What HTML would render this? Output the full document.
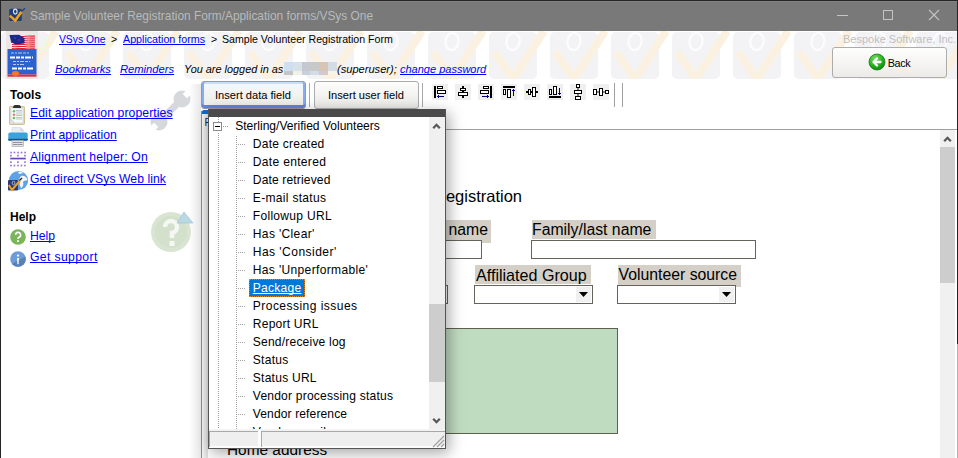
<!DOCTYPE html>
<html><head><meta charset="utf-8"><style>
html,body{margin:0;padding:0;}
body{width:958px;height:458px;position:relative;overflow:hidden;background:#fff;font-family:"Liberation Sans",sans-serif;}
.t{position:absolute;white-space:pre;}
u{text-decoration:underline;text-decoration-skip-ink:none;}
</style></head><body>
<div style="position:absolute;left:0;top:0;width:958px;height:31px;background:#797979;"></div>
<div style="position:absolute;left:0;top:0;width:958px;height:1px;background:#242424;"></div>
<div style="position:absolute;left:1px;top:1px;width:956px;height:1px;background:#828282;"></div>
<svg style="position:absolute;left:8px;top:7px" width="18" height="16" viewBox="0 0 18 16">
<rect x="1.2" y="1.7" width="12.6" height="12.3" rx="1.5" fill="#1f3f7a"/>
<ellipse cx="7.3" cy="4.6" rx="1.8" ry="2.5" fill="none" stroke="#e8e8f0" stroke-width="1.1"/>
<path d="M1.8 8.6 L7.3 13.6 L13.6 4.6" fill="none" stroke="#f0a020" stroke-width="2.6" stroke-linejoin="miter"/>
<path d="M13.4 4.6 L16.9 1.3" stroke="#1f3f7a" stroke-width="1.3"/>
</svg>
<div class="t " style="left:30px;top:8.88px;font-size:11.9px;line-height:15px;color:#b7bbbb;">Sample Volunteer Registration Form/Application forms/VSys One</div>
<div style="position:absolute;left:837px;top:15px;width:11px;height:1px;background:#c4c4c4"></div>
<div style="position:absolute;left:883px;top:10px;width:8px;height:8px;border:1px solid #c4c4c4"></div>
<svg style="position:absolute;left:928px;top:9px" width="12" height="12" viewBox="0 0 12 12"><path d="M1 1 L11 11 M11 1 L1 11" stroke="#c4c4c4" stroke-width="1.1"/></svg>
<div style="position:absolute;left:0;top:0;width:1px;height:458px;background:#242424;"></div>
<div style="position:absolute;left:957px;top:0;width:1px;height:344px;background:#242424;"></div>
<div style="position:absolute;left:957px;top:344px;width:1px;height:114px;background:#b4b4b4;"></div>
<svg style="position:absolute;left:1px;top:31px" width="956" height="48"><g transform="translate(0,1)">
<rect x="0" y="0" width="48" height="47" rx="5" fill="#f3f3f6"/>
<ellipse cx="24" cy="9.5" rx="6.5" ry="8.6" fill="none" stroke="#fcfcfd" stroke-width="2.3" transform="rotate(10 24 9.5)"/>
<path d="M5 20 L24 47 L55 -1" fill="none" stroke="#faf1e1" stroke-width="8" stroke-linejoin="miter"/>
</g><g transform="translate(61,1)">
<rect x="0" y="0" width="48" height="47" rx="5" fill="#f3f3f6"/>
<ellipse cx="24" cy="9.5" rx="6.5" ry="8.6" fill="none" stroke="#fcfcfd" stroke-width="2.3" transform="rotate(10 24 9.5)"/>
<path d="M5 20 L24 47 L55 -1" fill="none" stroke="#faf1e1" stroke-width="8" stroke-linejoin="miter"/>
</g><g transform="translate(122,1)">
<rect x="0" y="0" width="48" height="47" rx="5" fill="#f3f3f6"/>
<ellipse cx="24" cy="9.5" rx="6.5" ry="8.6" fill="none" stroke="#fcfcfd" stroke-width="2.3" transform="rotate(10 24 9.5)"/>
<path d="M5 20 L24 47 L55 -1" fill="none" stroke="#faf1e1" stroke-width="8" stroke-linejoin="miter"/>
</g><g transform="translate(183,1)">
<rect x="0" y="0" width="48" height="47" rx="5" fill="#f3f3f6"/>
<ellipse cx="24" cy="9.5" rx="6.5" ry="8.6" fill="none" stroke="#fcfcfd" stroke-width="2.3" transform="rotate(10 24 9.5)"/>
<path d="M5 20 L24 47 L55 -1" fill="none" stroke="#faf1e1" stroke-width="8" stroke-linejoin="miter"/>
</g><g transform="translate(244,1)">
<rect x="0" y="0" width="48" height="47" rx="5" fill="#f3f3f6"/>
<ellipse cx="24" cy="9.5" rx="6.5" ry="8.6" fill="none" stroke="#fcfcfd" stroke-width="2.3" transform="rotate(10 24 9.5)"/>
<path d="M5 20 L24 47 L55 -1" fill="none" stroke="#faf1e1" stroke-width="8" stroke-linejoin="miter"/>
</g><g transform="translate(305,1)">
<rect x="0" y="0" width="48" height="47" rx="5" fill="#f3f3f6"/>
<ellipse cx="24" cy="9.5" rx="6.5" ry="8.6" fill="none" stroke="#fcfcfd" stroke-width="2.3" transform="rotate(10 24 9.5)"/>
<path d="M5 20 L24 47 L55 -1" fill="none" stroke="#faf1e1" stroke-width="8" stroke-linejoin="miter"/>
</g><g transform="translate(366,1)">
<rect x="0" y="0" width="48" height="47" rx="5" fill="#f3f3f6"/>
<ellipse cx="24" cy="9.5" rx="6.5" ry="8.6" fill="none" stroke="#fcfcfd" stroke-width="2.3" transform="rotate(10 24 9.5)"/>
<path d="M5 20 L24 47 L55 -1" fill="none" stroke="#faf1e1" stroke-width="8" stroke-linejoin="miter"/>
</g><g transform="translate(427,1)">
<rect x="0" y="0" width="48" height="47" rx="5" fill="#f3f3f6"/>
<ellipse cx="24" cy="9.5" rx="6.5" ry="8.6" fill="none" stroke="#fcfcfd" stroke-width="2.3" transform="rotate(10 24 9.5)"/>
<path d="M5 20 L24 47 L55 -1" fill="none" stroke="#faf1e1" stroke-width="8" stroke-linejoin="miter"/>
</g><g transform="translate(488,1)">
<rect x="0" y="0" width="48" height="47" rx="5" fill="#f3f3f6"/>
<ellipse cx="24" cy="9.5" rx="6.5" ry="8.6" fill="none" stroke="#fcfcfd" stroke-width="2.3" transform="rotate(10 24 9.5)"/>
<path d="M5 20 L24 47 L55 -1" fill="none" stroke="#faf1e1" stroke-width="8" stroke-linejoin="miter"/>
</g><g transform="translate(549,1)">
<rect x="0" y="0" width="48" height="47" rx="5" fill="#f3f3f6"/>
<ellipse cx="24" cy="9.5" rx="6.5" ry="8.6" fill="none" stroke="#fcfcfd" stroke-width="2.3" transform="rotate(10 24 9.5)"/>
<path d="M5 20 L24 47 L55 -1" fill="none" stroke="#faf1e1" stroke-width="8" stroke-linejoin="miter"/>
</g><g transform="translate(610,1)">
<rect x="0" y="0" width="48" height="47" rx="5" fill="#f3f3f6"/>
<ellipse cx="24" cy="9.5" rx="6.5" ry="8.6" fill="none" stroke="#fcfcfd" stroke-width="2.3" transform="rotate(10 24 9.5)"/>
<path d="M5 20 L24 47 L55 -1" fill="none" stroke="#faf1e1" stroke-width="8" stroke-linejoin="miter"/>
</g><g transform="translate(671,1)">
<rect x="0" y="0" width="48" height="47" rx="5" fill="#f3f3f6"/>
<ellipse cx="24" cy="9.5" rx="6.5" ry="8.6" fill="none" stroke="#fcfcfd" stroke-width="2.3" transform="rotate(10 24 9.5)"/>
<path d="M5 20 L24 47 L55 -1" fill="none" stroke="#faf1e1" stroke-width="8" stroke-linejoin="miter"/>
</g><g transform="translate(732,1)">
<rect x="0" y="0" width="48" height="47" rx="5" fill="#f3f3f6"/>
<ellipse cx="24" cy="9.5" rx="6.5" ry="8.6" fill="none" stroke="#fcfcfd" stroke-width="2.3" transform="rotate(10 24 9.5)"/>
<path d="M5 20 L24 47 L55 -1" fill="none" stroke="#faf1e1" stroke-width="8" stroke-linejoin="miter"/>
</g><g transform="translate(793,1)">
<rect x="0" y="0" width="48" height="47" rx="5" fill="#f3f3f6"/>
<ellipse cx="24" cy="9.5" rx="6.5" ry="8.6" fill="none" stroke="#fcfcfd" stroke-width="2.3" transform="rotate(10 24 9.5)"/>
<path d="M5 20 L24 47 L55 -1" fill="none" stroke="#faf1e1" stroke-width="8" stroke-linejoin="miter"/>
</g><g transform="translate(854,1)">
<rect x="0" y="0" width="48" height="47" rx="5" fill="#f3f3f6"/>
<ellipse cx="24" cy="9.5" rx="6.5" ry="8.6" fill="none" stroke="#fcfcfd" stroke-width="2.3" transform="rotate(10 24 9.5)"/>
<path d="M5 20 L24 47 L55 -1" fill="none" stroke="#faf1e1" stroke-width="8" stroke-linejoin="miter"/>
</g><g transform="translate(915,1)">
<rect x="0" y="0" width="48" height="47" rx="5" fill="#f3f3f6"/>
<ellipse cx="24" cy="9.5" rx="6.5" ry="8.6" fill="none" stroke="#fcfcfd" stroke-width="2.3" transform="rotate(10 24 9.5)"/>
<path d="M5 20 L24 47 L55 -1" fill="none" stroke="#faf1e1" stroke-width="8" stroke-linejoin="miter"/>
</g></svg>
<svg style="position:absolute;left:6px;top:31px" width="32" height="48" viewBox="0 0 32 48">
<rect width="32" height="48" fill="#ece6e4"/>
<path d="M4 4 L28 4.5 L29 17.5 L6 19 Z" fill="#f6f2f2"/>
<path d="M5 5.5 C10 4.7 14 6.2 20 5.2 C24 4.5 26 5.6 29 5 M5 7.5 C10 6.7 14 8.2 20 7.2 C24 6.5 26 7.6 29 7 M5 9.5 C10 8.7 14 10.2 20 9.2 C24 8.5 26 9.6 29 9 M5 11.5 C10 10.7 14 12.2 20 11.2 C24 10.5 26 11.6 29 11 M6 13.5 C10 12.7 14 14.2 20 13.2 C24 12.5 26 13.6 29 13 M6 15.5 C10 14.7 14 16.2 20 15.2 C24 14.5 26 15.6 29 15 M6 17.5 C10 16.7 14 18.2 20 17.2 C24 16.5 26 17.6 29 17" fill="none" stroke="#e02030" stroke-width="1.1"/>
<path d="M3.5 4 L13 3.8 L18.5 7 L18.5 12.5 L9 13.5 L5 10.5 Z" fill="#1a2a8a"/>
<circle cx="9" cy="7" r="0.45" fill="#c8d0f0"/><circle cx="13" cy="9" r="0.45" fill="#c8d0f0"/>
<rect x="1.5" y="18" width="29" height="25.5" fill="#2d62cc"/>
<path d="M5 22 H23 M7 30.5 H24 M7 33.5 H18" stroke="#c8d4f4" stroke-width="0.9" stroke-dasharray="3 1 2 1 4 1"/>
<path d="M4 26.5 H27 M6 37.5 H28" stroke="#ffffff" stroke-width="1.8" stroke-dasharray="5 1 4 1 3 1 6 1"/>
<rect x="1.5" y="43.5" width="29" height="2.2" fill="#d83040"/>
<ellipse cx="9.5" cy="42.5" rx="3.5" ry="2.4" fill="#f07828"/>
</svg>
<div class="t " style="left:59px;top:32.93px;font-size:10.3px;line-height:13px;color:#0000ff;"><u>VSys One</u></div>
<div class="t " style="left:111px;top:32.83px;font-size:10.6px;line-height:13px;color:#000;">&gt;</div>
<div class="t " style="left:123px;top:32.79px;font-size:10.7px;line-height:13px;color:#0000ff;"><u>Application forms</u></div>
<div class="t " style="left:211px;top:32.83px;font-size:10.6px;line-height:13px;color:#000;">&gt;</div>
<div class="t " style="left:222px;top:32.83px;font-size:10.6px;line-height:13px;color:#000;">Sample Volunteer Registration Form</div>
<div class="t " style="left:843px;top:31.89px;font-size:11px;line-height:14px;color:#c0c0c0;">Bespoke Software, Inc.</div>
<div class="t " style="left:55px;top:62.12px;font-size:11.2px;line-height:14px;color:#0000ff;font-style:italic"><u>Bookmarks</u></div>
<div class="t " style="left:120px;top:62.12px;font-size:11.2px;line-height:14px;color:#0000ff;font-style:italic"><u>Reminders</u></div>
<div class="t " style="left:184px;top:62.22px;font-size:10.9px;line-height:14px;color:#000;font-style:italic">You are logged in as</div>
<div style="position:absolute;left:284px;top:62px;width:9px;height:9px;background:#d0dff0"></div>
<div style="position:absolute;left:284px;top:71px;width:9px;height:4px;background:#c4c4c4"></div>
<div style="position:absolute;left:293px;top:62px;width:9px;height:9px;background:#d5e2ea"></div>
<div style="position:absolute;left:293px;top:71px;width:9px;height:4px;background:#f2f2e4"></div>
<div style="position:absolute;left:302px;top:62px;width:8px;height:9px;background:#c6c8d0"></div>
<div style="position:absolute;left:302px;top:71px;width:8px;height:4px;background:#c8d0dc"></div>
<div style="position:absolute;left:310px;top:62px;width:9px;height:9px;background:#c8c8c8"></div>
<div style="position:absolute;left:310px;top:71px;width:9px;height:4px;background:#d4dce6"></div>
<div style="position:absolute;left:319px;top:62px;width:9px;height:9px;background:#d8c4b4"></div>
<div style="position:absolute;left:319px;top:71px;width:9px;height:4px;background:#d4c8cc"></div>
<div style="position:absolute;left:328px;top:62px;width:9px;height:9px;background:#d4dce6"></div>
<div style="position:absolute;left:328px;top:71px;width:9px;height:4px;background:#f8f4e4"></div>
<div class="t " style="left:337px;top:62.15px;font-size:11.1px;line-height:14px;color:#000;font-style:italic">(superuser);</div>
<div class="t " style="left:400px;top:62.19px;font-size:11.0px;line-height:14px;color:#0000ff;font-style:italic"><u>change password</u></div>
<div style="position:absolute;left:832px;top:47px;width:113px;height:29px;border:1px solid #acacac;border-radius:3px;background:linear-gradient(#fefefe,#f4f3f1 60%,#ecebe8);"></div>
<svg style="position:absolute;left:868px;top:53px" width="18" height="18" viewBox="0 0 18 18">
<defs><radialGradient id="gb" cx="0.4" cy="0.3" r="0.75"><stop offset="0" stop-color="#7de06a"/><stop offset="0.6" stop-color="#26b01e"/><stop offset="1" stop-color="#11800e"/></radialGradient></defs>
<circle cx="9" cy="9" r="8" fill="url(#gb)" stroke="#1a7a14" stroke-width="0.8"/>
<path d="M12.5 9 H6 M9 5.5 L5.5 9 L9 12.5" fill="none" stroke="#fff" stroke-width="2.3" stroke-linecap="round" stroke-linejoin="round"/>
</svg>
<div class="t " style="left:887.8px;top:55.96px;font-size:10.8px;line-height:14px;color:#000;letter-spacing:-0.4px">Back</div>
<div style="position:absolute;left:189px;top:84px;width:12px;height:374px;background:linear-gradient(90deg,rgba(235,235,235,0),#e8e8e8);"></div>
<svg style="position:absolute;left:148px;top:88px" width="46" height="46" viewBox="0 0 46 46">
<defs><mask id="wmk"><rect width="46" height="46" fill="#fff"/>
<rect x="-3" y="-13" width="6" height="9" fill="#000" transform="translate(34,11) rotate(45)"/>
<rect x="-3" y="-13" width="6" height="9" fill="#000" transform="translate(11,34) rotate(225)"/>
</mask></defs>
<g mask="url(#wmk)" fill="#d5d9dc">
<circle cx="34" cy="11" r="8.5"/><circle cx="11" cy="34" r="8.5"/>
<path d="M11 34 L34 11" stroke="#d5d9dc" stroke-width="7"/>
</g></svg>
<div class="t " style="left:10px;top:87.54px;font-size:12px;line-height:15px;color:#000;font-weight:bold">Tools</div>
<div class="t " style="left:30px;top:105.77px;font-size:12.2px;line-height:15px;color:#0000ff;letter-spacing:0.09px"><u>Edit application properties</u></div>
<div class="t " style="left:30px;top:127.77px;font-size:12.2px;line-height:15px;color:#0000ff;"><u>Print application</u></div>
<div class="t " style="left:30px;top:150.27px;font-size:12.2px;line-height:15px;color:#0000ff;letter-spacing:0.17px"><u>Alignment helper: On</u></div>
<div class="t " style="left:30px;top:171.87px;font-size:12.2px;line-height:15px;color:#0000ff;letter-spacing:0.06px"><u>Get direct VSys Web link</u></div>
<div class="t " style="left:10px;top:209.74px;font-size:12px;line-height:15px;color:#000;font-weight:bold">Help</div>
<div class="t " style="left:30px;top:228.77px;font-size:12.2px;line-height:15px;color:#0000ff;"><u>Help</u></div>
<div class="t " style="left:30px;top:249.67px;font-size:12.2px;line-height:15px;color:#0000ff;letter-spacing:0.36px"><u>Get support</u></div>
<svg style="position:absolute;left:150px;top:211px" width="44" height="42" viewBox="0 0 44 42">
<circle cx="21" cy="21" r="20" fill="#d9e5d2"/>
<circle cx="21" cy="21" r="16" fill="#d3e0cb"/>
<path d="M15 16 A6 6 0 1 1 22 22 L22 27" fill="none" stroke="#f4f7f2" stroke-width="4.5"/>
<rect x="19.5" y="30" width="5" height="5" fill="#f4f7f2"/>
<path d="M34 1 L43 12 L27 12 Z" fill="#b9d8e2" stroke="#a8c4dc" stroke-width="0.8"/>
</svg>
<svg style="position:absolute;left:9px;top:104px" width="16" height="21" viewBox="0 0 16 21">
<rect x="0.5" y="2.5" width="15" height="18" rx="0.8" fill="#eadfbe" stroke="#c9b27a" stroke-width="0.8"/>
<rect x="2" y="4" width="12" height="15" fill="#f8fbfd" stroke="#b8d0e4" stroke-width="0.6"/>
<path d="M4 3.2 Q4.5 1 6 1 L10 1 Q11.5 1 12 3.2 L12 4 L4 4 Z" fill="#303030"/>
<circle cx="5" cy="7.3" r="1.3" fill="#6ec060"/>
<circle cx="5" cy="10.7" r="1.3" fill="#d88080"/>
<circle cx="5" cy="14" r="1.3" fill="#6ec060"/>
<path d="M7 6.5 H13 M7 8 H13 M7 10 H13 M7 11.5 H13 M7 13.5 H13 M7 15 H13" stroke="#a8b0b8" stroke-width="0.7"/>
<path d="M2.2 15.5 L5 19" stroke="#b0b0b0" stroke-width="0.8"/>
</svg>
<svg style="position:absolute;left:8px;top:127px" width="20" height="20" viewBox="0 0 20 20">
<path d="M4 0.5 H12.5 L16 4 V7 H4 Z" fill="#e9edf0" stroke="#cfd4d8" stroke-width="0.6"/>
<path d="M12.5 0.5 V4 H16" fill="#d0d6da"/>
<rect x="0.3" y="5.5" width="19.4" height="8.5" rx="1.5" fill="#3aa2dc"/>
<rect x="0.3" y="11.8" width="19.4" height="1.6" fill="#1e5478"/>
<rect x="4" y="13.5" width="11.5" height="6" fill="#e4e6e8" stroke="#9aa0a4" stroke-width="0.6"/>
<path d="M5 15.5 H14.5 M5 17.5 H14.5" stroke="#80868a" stroke-width="0.9"/>
<path d="M9.75 14 V19.3" stroke="#c8ccd0" stroke-width="0.6"/>
</svg>
<svg style="position:absolute;left:10px;top:151px" width="16" height="16" viewBox="0 0 16 16"><rect x="0.2" y="0.7" width="1.7" height="1.7" fill="#9a7ad0"/><rect x="0.1" y="13.7" width="1.7" height="1.7" fill="#9a7ad0"/><rect x="3.6" y="0.7" width="1.7" height="1.7" fill="#9a7ad0"/><rect x="3.6" y="13.7" width="1.7" height="1.7" fill="#9a7ad0"/><rect x="7.2" y="0.7" width="1.7" height="1.7" fill="#9a7ad0"/><rect x="7.1" y="13.7" width="1.7" height="1.7" fill="#9a7ad0"/><rect x="10.7" y="0.7" width="1.7" height="1.7" fill="#9a7ad0"/><rect x="10.6" y="13.7" width="1.7" height="1.7" fill="#9a7ad0"/><rect x="14.2" y="0.7" width="1.7" height="1.7" fill="#9a7ad0"/><rect x="14.1" y="13.7" width="1.7" height="1.7" fill="#9a7ad0"/><rect x="0.1" y="3.8" width="1.7" height="1.7" fill="#9a7ad0"/><rect x="0.1" y="10.3" width="1.7" height="1.7" fill="#9a7ad0"/><rect x="7.1" y="3.8" width="1.7" height="1.7" fill="#9a7ad0"/><rect x="7.1" y="10.3" width="1.7" height="1.7" fill="#9a7ad0"/><rect x="14.1" y="3.8" width="1.7" height="1.7" fill="#9a7ad0"/><rect x="14.1" y="10.3" width="1.7" height="1.7" fill="#9a7ad0"/><rect x="0.2" y="6.7" width="15.6" height="1.7" fill="#6a44b8"/></svg>
<svg style="position:absolute;left:7px;top:170px" width="22" height="22" viewBox="0 0 22 22">
<circle cx="11.5" cy="10.5" r="9.6" fill="#5da2e6"/>
<path d="M11 2 C13 1.5 15 2 16 3 C14 4 13 3.5 12 4 Z M14 6 C17 5 20 7 20.5 10 C19 11 17 10 16 12 C17 14 16 17 14 18 C13 16 12 14 13 12 C12 10 12 8 14 6 Z" fill="#f2f6fa"/>
<rect x="1" y="10" width="10" height="10.5" rx="1" fill="#2a3a70"/>
<ellipse cx="6.5" cy="13" rx="1.4" ry="1.8" fill="none" stroke="#c0c8e0" stroke-width="0.8"/>
<path d="M1.8 15 L5 20 L13 10.5" fill="none" stroke="#f0a020" stroke-width="2"/>
<path d="M12.5 10.5 L15 8" stroke="#202020" stroke-width="1.2"/>
</svg>
<svg style="position:absolute;left:10px;top:229px" width="16" height="16" viewBox="0 0 16 16">
<circle cx="8" cy="8" r="7.8" fill="#7ab55c"/>
<path d="M5.6 5.8 A2.5 2.5 0 1 1 8.9 8.2 Q8 8.8 8 10" fill="none" stroke="#fff" stroke-width="1.6"/>
<rect x="7.1" y="11.2" width="1.8" height="1.8" fill="#fff"/>
</svg>
<svg style="position:absolute;left:10px;top:251px" width="16" height="16" viewBox="0 0 16 16">
<defs><clipPath id="ic"><circle cx="8" cy="8" r="7.8"/></clipPath></defs>
<g clip-path="url(#ic)"><rect width="16" height="16" fill="#6e9cd8"/><path d="M0 14 L16 5 L16 16 L0 16 Z" fill="#5a80b8"/></g>
<circle cx="8" cy="4.6" r="1.15" fill="#fff"/>
<path d="M7.1 7 H8.9 L8.6 13.2 H7.4 Z" fill="#fff"/>
</svg>
<div style="position:absolute;left:201px;top:81px;width:103px;height:26px;border:1px solid #9a9a9a;border-radius:3px;background:linear-gradient(#f4f8fe,#f2f2f0 50%,#ecebe8);box-shadow:inset 0 -3px 0 0 #6284e0, inset 2px 0 0 0 #88acf0, inset -2px 0 0 0 #88acf0, inset 0 2px 0 0 #c4e0fc;"></div>
<div class="t " style="left:215px;top:88.15px;font-size:11.1px;line-height:14px;color:#000;">Insert data field</div>
<div style="position:absolute;left:309px;top:83px;width:1px;height:24px;background:#a8a8a8"></div>
<div style="position:absolute;left:314px;top:81px;width:103px;height:26px;border:1px solid #acacac;border-radius:3px;background:linear-gradient(#fdfdfd,#f3f3f1 50%,#ebeae7);"></div>
<div class="t " style="left:328px;top:88.15px;font-size:11.1px;line-height:14px;color:#000;">Insert user field</div>
<div style="position:absolute;left:422px;top:83px;width:1px;height:24px;background:#a8a8a8"></div>
<svg style="position:absolute;left:432px;top:84px" width="16" height="16" viewBox="0 0 16 16" shape-rendering="crispEdges"><rect width="16" height="16" fill="#efefef"/><rect x="2" y="2" width="2" height="12" fill="#000"/><rect x="5" y="2" width="6" height="3" fill="#000"/><rect x="6" y="3" width="4" height="1" fill="#fff"/><rect x="5" y="6" width="9" height="4" fill="#000"/><rect x="6" y="7" width="7" height="2" fill="#fff"/><rect x="5" y="12" width="7" height="1" fill="#000080"/><rect x="6" y="11" width="1" height="3" fill="#000080"/></svg>
<svg style="position:absolute;left:455px;top:84px" width="16" height="16" viewBox="0 0 16 16" shape-rendering="crispEdges"><rect width="16" height="16" fill="#efefef"/><rect x="7" y="2" width="2" height="12" fill="#000"/><rect x="5" y="4" width="6" height="3" fill="#000"/><rect x="6" y="5" width="4" height="1" fill="#fff"/><rect x="3" y="8" width="10" height="4" fill="#000"/><rect x="4" y="9" width="8" height="2" fill="#fff"/></svg>
<svg style="position:absolute;left:478px;top:84px" width="16" height="16" viewBox="0 0 16 16" shape-rendering="crispEdges"><rect width="16" height="16" fill="#efefef"/><rect x="12" y="2" width="2" height="12" fill="#000"/><rect x="5" y="2" width="6" height="3" fill="#000"/><rect x="6" y="3" width="4" height="1" fill="#fff"/><rect x="2" y="6" width="9" height="4" fill="#000"/><rect x="3" y="7" width="7" height="2" fill="#fff"/><rect x="4" y="12" width="7" height="1" fill="#000080"/><rect x="9" y="11" width="1" height="3" fill="#000080"/></svg>
<svg style="position:absolute;left:501px;top:84px" width="16" height="16" viewBox="0 0 16 16" shape-rendering="crispEdges"><rect width="16" height="16" fill="#efefef"/><rect x="2" y="2" width="12" height="2" fill="#000"/><rect x="2" y="5" width="3" height="6" fill="#000"/><rect x="3" y="6" width="1" height="4" fill="#fff"/><rect x="6" y="5" width="4" height="9" fill="#000"/><rect x="7" y="6" width="2" height="7" fill="#fff"/><rect x="12" y="5" width="1" height="7" fill="#000080"/><rect x="11" y="6" width="3" height="1" fill="#000080"/></svg>
<svg style="position:absolute;left:524px;top:84px" width="16" height="16" viewBox="0 0 16 16" shape-rendering="crispEdges"><rect width="16" height="16" fill="#efefef"/><rect x="2" y="7" width="12" height="2" fill="#000"/><rect x="4" y="5" width="3" height="6" fill="#000"/><rect x="5" y="6" width="1" height="4" fill="#fff"/><rect x="8" y="3" width="4" height="10" fill="#000"/><rect x="9" y="4" width="2" height="8" fill="#fff"/></svg>
<svg style="position:absolute;left:547px;top:84px" width="16" height="16" viewBox="0 0 16 16" shape-rendering="crispEdges"><rect width="16" height="16" fill="#efefef"/><rect x="2" y="12" width="12" height="2" fill="#000"/><rect x="2" y="5" width="3" height="6" fill="#000"/><rect x="3" y="6" width="1" height="4" fill="#fff"/><rect x="6" y="2" width="4" height="9" fill="#000"/><rect x="7" y="3" width="2" height="7" fill="#fff"/><rect x="12" y="4" width="1" height="7" fill="#000080"/><rect x="11" y="9" width="3" height="1" fill="#000080"/></svg>
<svg style="position:absolute;left:570px;top:84px" width="16" height="16" viewBox="0 0 16 16" shape-rendering="crispEdges"><rect width="16" height="16" fill="#efefef"/><rect x="6" y="0" width="4" height="4" fill="#000"/><rect x="7" y="1" width="2" height="2" fill="#fff"/><rect x="7" y="4" width="2" height="2" fill="#808080"/><rect x="4" y="6" width="8" height="4" fill="#000"/><rect x="5" y="7" width="6" height="2" fill="#fff"/><rect x="7" y="10" width="2" height="2" fill="#808080"/><rect x="5" y="12" width="6" height="4" fill="#000"/><rect x="6" y="13" width="4" height="2" fill="#fff"/></svg>
<svg style="position:absolute;left:593px;top:84px" width="16" height="16" viewBox="0 0 16 16" shape-rendering="crispEdges"><rect width="16" height="16" fill="#efefef"/><rect x="0" y="5" width="4" height="6" fill="#000"/><rect x="1" y="6" width="2" height="4" fill="#fff"/><rect x="4" y="7" width="2" height="2" fill="#808080"/><rect x="6" y="4" width="4" height="8" fill="#000"/><rect x="7" y="5" width="2" height="6" fill="#fff"/><rect x="10" y="7" width="2" height="2" fill="#808080"/><rect x="12" y="6" width="4" height="4" fill="#000"/><rect x="13" y="7" width="2" height="2" fill="#fff"/></svg>
<div style="position:absolute;left:614px;top:83px;width:1px;height:24px;background:#a0a0a0"></div>
<div style="position:absolute;left:622px;top:83px;width:1px;height:24px;background:#a0a0a0"></div>
<div style="position:absolute;left:201px;top:111px;width:1px;height:347px;background:#8c8c8c"></div>
<div style="position:absolute;left:202px;top:110px;width:6px;height:348px;background:linear-gradient(90deg,#f4f4f4,#dcdcdc)"></div>
<div style="position:absolute;left:202px;top:110px;width:6px;height:4px;background:#0a6ad0;border-top-left-radius:2px"></div>
<div class="t " style="left:204.5px;top:116.73px;font-size:10px;line-height:12px;color:#1a1a40;">F</div>
<div style="position:absolute;left:446px;top:129px;width:511px;height:1px;background:#a0a0a0"></div>
<div style="position:absolute;left:940px;top:130px;width:15px;height:328px;background:#f0f0f0"></div>
<div style="position:absolute;left:940px;top:147px;width:15px;height:136px;background:#cdcdcd"></div>
<svg style="position:absolute;left:943px;top:135px" width="9" height="8" viewBox="0 0 9 8"><path d="M1.2 6.2 L4.5 2.8 L7.8 6.2" fill="none" stroke="#585858" stroke-width="2.3"/></svg>
<div class="t " style="left:434px;top:185.78px;font-size:16.5px;line-height:21px;color:#000;">Registration</div>
<div style="position:absolute;left:400px;top:220px;width:91px;height:23px;background:#d4d0c8"></div>
<div class="t " style="left:402.8px;top:220.03px;font-size:15.8px;line-height:20px;color:#000;">Given name</div>
<div style="position:absolute;left:400px;top:240px;width:80px;height:17px;border:1px solid #646458;background:#fff"></div>
<div style="position:absolute;left:532px;top:220px;width:124px;height:19px;background:#d4d0c8"></div>
<div class="t " style="left:532px;top:220.03px;font-size:15.8px;line-height:20px;color:#000;">Family/last name</div>
<div style="position:absolute;left:531px;top:240px;width:223px;height:17px;border:1px solid #646458;background:#fff"></div>
<div style="position:absolute;left:400px;top:285px;width:46px;height:17px;border:1px solid #646458;background:#fff"></div>
<div style="position:absolute;left:475px;top:265px;width:116px;height:19px;background:#d4d0c8"></div>
<div class="t " style="left:476px;top:264.92px;font-size:16.1px;line-height:20px;color:#000;">Affiliated Group</div>
<div style="position:absolute;left:474px;top:285px;width:117px;height:17px;border:1px solid #646458;background:#fff"></div>
<div style="position:absolute;left:576px;top:287px;width:15px;height:15px;background:#f0f0f0"></div>
<svg style="position:absolute;left:579px;top:292px" width="9" height="5"><path d="M0 0 H9 L4.5 5 Z" fill="#000"/></svg>
<div style="position:absolute;left:618px;top:265px;width:123px;height:22px;background:#d4d0c8"></div>
<div class="t " style="left:618.5px;top:265.03px;font-size:15.8px;line-height:20px;color:#000;">Volunteer source</div>
<div style="position:absolute;left:617px;top:285px;width:117px;height:17px;border:1px solid #646458;background:#fff"></div>
<div style="position:absolute;left:719px;top:287px;width:15px;height:15px;background:#f0f0f0"></div>
<svg style="position:absolute;left:722px;top:292px" width="9" height="5"><path d="M0 0 H9 L4.5 5 Z" fill="#000"/></svg>
<div style="position:absolute;left:400px;top:328px;width:216px;height:104px;border:1px solid #606050;background:#c0dcc0"></div>
<div class="t " style="left:227px;top:439.66px;font-size:15.4px;line-height:19px;color:#000;">Home address</div>
<div style="position:absolute;left:208px;top:109px;width:238px;height:340px;box-shadow:3px 4px 14px rgba(0,0,0,0.35);background:#fff"></div>
<div style="position:absolute;left:208px;top:109px;width:238px;height:8px;background:#4a4a4a"></div>
<div style="position:absolute;left:208px;top:109px;width:1px;height:340px;background:#555"></div>
<div style="position:absolute;left:445px;top:109px;width:1px;height:340px;background:#555"></div>
<div style="position:absolute;left:208px;top:448px;width:238px;height:1px;background:#555"></div>
<div style="position:absolute;left:429px;top:117px;width:16px;height:312px;background:#f0f0f0"></div>
<div style="position:absolute;left:429px;top:304px;width:16px;height:78px;background:#cdcdcd"></div>
<svg style="position:absolute;left:432px;top:122px" width="9" height="8" viewBox="0 0 9 8"><path d="M1.2 6.2 L4.5 2.8 L7.8 6.2" fill="none" stroke="#585858" stroke-width="2.3"/></svg>
<svg style="position:absolute;left:432px;top:417px" width="9" height="8" viewBox="0 0 9 8"><path d="M1.2 1.8 L4.5 5.2 L7.8 1.8" fill="none" stroke="#585858" stroke-width="2.3"/></svg>
<div style="position:absolute;left:209px;top:429px;width:236px;height:2px;background:#f2f2f2"></div>
<div style="position:absolute;left:209px;top:431px;width:236px;height:1px;background:#a8a8a8"></div>
<div style="position:absolute;left:209px;top:432px;width:236px;height:15px;background:#efefef"></div>
<div style="position:absolute;left:209px;top:446px;width:236px;height:2px;background:#fcfcfc"></div>
<div style="position:absolute;left:209px;top:431px;width:1px;height:16px;background:#a8a8a8"></div>
<div style="position:absolute;left:258px;top:431px;width:3px;height:17px;background:#fcfcfc"></div>
<div style="position:absolute;left:261px;top:431px;width:1px;height:16px;background:#a8a8a8"></div>
<svg style="position:absolute;left:432px;top:435px" width="13" height="13" viewBox="0 0 13 13"><path d="M1 12 L12 1 M5 12 L12 5 M9 12 L12 9" stroke="#a0a0a0" stroke-width="1.1"/></svg>
<div style="position:absolute;left:209px;top:117px;width:220px;height:312px;overflow:hidden"><svg style="position:absolute;left:0;top:0" width="220" height="313" shape-rendering="crispEdges"><rect x="9" y="0" width="1" height="1" fill="#a0a0a0"/><rect x="9" y="2" width="1" height="1" fill="#a0a0a0"/><rect x="9" y="4" width="1" height="1" fill="#a0a0a0"/><rect x="9" y="16" width="1" height="1" fill="#a0a0a0"/><rect x="9" y="18" width="1" height="1" fill="#a0a0a0"/><rect x="9" y="20" width="1" height="1" fill="#a0a0a0"/><rect x="9" y="22" width="1" height="1" fill="#a0a0a0"/><rect x="9" y="24" width="1" height="1" fill="#a0a0a0"/><rect x="9" y="26" width="1" height="1" fill="#a0a0a0"/><rect x="9" y="28" width="1" height="1" fill="#a0a0a0"/><rect x="9" y="30" width="1" height="1" fill="#a0a0a0"/><rect x="9" y="32" width="1" height="1" fill="#a0a0a0"/><rect x="9" y="34" width="1" height="1" fill="#a0a0a0"/><rect x="9" y="36" width="1" height="1" fill="#a0a0a0"/><rect x="9" y="38" width="1" height="1" fill="#a0a0a0"/><rect x="9" y="40" width="1" height="1" fill="#a0a0a0"/><rect x="9" y="42" width="1" height="1" fill="#a0a0a0"/><rect x="9" y="44" width="1" height="1" fill="#a0a0a0"/><rect x="9" y="46" width="1" height="1" fill="#a0a0a0"/><rect x="9" y="48" width="1" height="1" fill="#a0a0a0"/><rect x="9" y="50" width="1" height="1" fill="#a0a0a0"/><rect x="9" y="52" width="1" height="1" fill="#a0a0a0"/><rect x="9" y="54" width="1" height="1" fill="#a0a0a0"/><rect x="9" y="56" width="1" height="1" fill="#a0a0a0"/><rect x="9" y="58" width="1" height="1" fill="#a0a0a0"/><rect x="9" y="60" width="1" height="1" fill="#a0a0a0"/><rect x="9" y="62" width="1" height="1" fill="#a0a0a0"/><rect x="9" y="64" width="1" height="1" fill="#a0a0a0"/><rect x="9" y="66" width="1" height="1" fill="#a0a0a0"/><rect x="9" y="68" width="1" height="1" fill="#a0a0a0"/><rect x="9" y="70" width="1" height="1" fill="#a0a0a0"/><rect x="9" y="72" width="1" height="1" fill="#a0a0a0"/><rect x="9" y="74" width="1" height="1" fill="#a0a0a0"/><rect x="9" y="76" width="1" height="1" fill="#a0a0a0"/><rect x="9" y="78" width="1" height="1" fill="#a0a0a0"/><rect x="9" y="80" width="1" height="1" fill="#a0a0a0"/><rect x="9" y="82" width="1" height="1" fill="#a0a0a0"/><rect x="9" y="84" width="1" height="1" fill="#a0a0a0"/><rect x="9" y="86" width="1" height="1" fill="#a0a0a0"/><rect x="9" y="88" width="1" height="1" fill="#a0a0a0"/><rect x="9" y="90" width="1" height="1" fill="#a0a0a0"/><rect x="9" y="92" width="1" height="1" fill="#a0a0a0"/><rect x="9" y="94" width="1" height="1" fill="#a0a0a0"/><rect x="9" y="96" width="1" height="1" fill="#a0a0a0"/><rect x="9" y="98" width="1" height="1" fill="#a0a0a0"/><rect x="9" y="100" width="1" height="1" fill="#a0a0a0"/><rect x="9" y="102" width="1" height="1" fill="#a0a0a0"/><rect x="9" y="104" width="1" height="1" fill="#a0a0a0"/><rect x="9" y="106" width="1" height="1" fill="#a0a0a0"/><rect x="9" y="108" width="1" height="1" fill="#a0a0a0"/><rect x="9" y="110" width="1" height="1" fill="#a0a0a0"/><rect x="9" y="112" width="1" height="1" fill="#a0a0a0"/><rect x="9" y="114" width="1" height="1" fill="#a0a0a0"/><rect x="9" y="116" width="1" height="1" fill="#a0a0a0"/><rect x="9" y="118" width="1" height="1" fill="#a0a0a0"/><rect x="9" y="120" width="1" height="1" fill="#a0a0a0"/><rect x="9" y="122" width="1" height="1" fill="#a0a0a0"/><rect x="9" y="124" width="1" height="1" fill="#a0a0a0"/><rect x="9" y="126" width="1" height="1" fill="#a0a0a0"/><rect x="9" y="128" width="1" height="1" fill="#a0a0a0"/><rect x="9" y="130" width="1" height="1" fill="#a0a0a0"/><rect x="9" y="132" width="1" height="1" fill="#a0a0a0"/><rect x="9" y="134" width="1" height="1" fill="#a0a0a0"/><rect x="9" y="136" width="1" height="1" fill="#a0a0a0"/><rect x="9" y="138" width="1" height="1" fill="#a0a0a0"/><rect x="9" y="140" width="1" height="1" fill="#a0a0a0"/><rect x="9" y="142" width="1" height="1" fill="#a0a0a0"/><rect x="9" y="144" width="1" height="1" fill="#a0a0a0"/><rect x="9" y="146" width="1" height="1" fill="#a0a0a0"/><rect x="9" y="148" width="1" height="1" fill="#a0a0a0"/><rect x="9" y="150" width="1" height="1" fill="#a0a0a0"/><rect x="9" y="152" width="1" height="1" fill="#a0a0a0"/><rect x="9" y="154" width="1" height="1" fill="#a0a0a0"/><rect x="9" y="156" width="1" height="1" fill="#a0a0a0"/><rect x="9" y="158" width="1" height="1" fill="#a0a0a0"/><rect x="9" y="160" width="1" height="1" fill="#a0a0a0"/><rect x="9" y="162" width="1" height="1" fill="#a0a0a0"/><rect x="9" y="164" width="1" height="1" fill="#a0a0a0"/><rect x="9" y="166" width="1" height="1" fill="#a0a0a0"/><rect x="9" y="168" width="1" height="1" fill="#a0a0a0"/><rect x="9" y="170" width="1" height="1" fill="#a0a0a0"/><rect x="9" y="172" width="1" height="1" fill="#a0a0a0"/><rect x="9" y="174" width="1" height="1" fill="#a0a0a0"/><rect x="9" y="176" width="1" height="1" fill="#a0a0a0"/><rect x="9" y="178" width="1" height="1" fill="#a0a0a0"/><rect x="9" y="180" width="1" height="1" fill="#a0a0a0"/><rect x="9" y="182" width="1" height="1" fill="#a0a0a0"/><rect x="9" y="184" width="1" height="1" fill="#a0a0a0"/><rect x="9" y="186" width="1" height="1" fill="#a0a0a0"/><rect x="9" y="188" width="1" height="1" fill="#a0a0a0"/><rect x="9" y="190" width="1" height="1" fill="#a0a0a0"/><rect x="9" y="192" width="1" height="1" fill="#a0a0a0"/><rect x="9" y="194" width="1" height="1" fill="#a0a0a0"/><rect x="9" y="196" width="1" height="1" fill="#a0a0a0"/><rect x="9" y="198" width="1" height="1" fill="#a0a0a0"/><rect x="9" y="200" width="1" height="1" fill="#a0a0a0"/><rect x="9" y="202" width="1" height="1" fill="#a0a0a0"/><rect x="9" y="204" width="1" height="1" fill="#a0a0a0"/><rect x="9" y="206" width="1" height="1" fill="#a0a0a0"/><rect x="9" y="208" width="1" height="1" fill="#a0a0a0"/><rect x="9" y="210" width="1" height="1" fill="#a0a0a0"/><rect x="9" y="212" width="1" height="1" fill="#a0a0a0"/><rect x="9" y="214" width="1" height="1" fill="#a0a0a0"/><rect x="9" y="216" width="1" height="1" fill="#a0a0a0"/><rect x="9" y="218" width="1" height="1" fill="#a0a0a0"/><rect x="9" y="220" width="1" height="1" fill="#a0a0a0"/><rect x="9" y="222" width="1" height="1" fill="#a0a0a0"/><rect x="9" y="224" width="1" height="1" fill="#a0a0a0"/><rect x="9" y="226" width="1" height="1" fill="#a0a0a0"/><rect x="9" y="228" width="1" height="1" fill="#a0a0a0"/><rect x="9" y="230" width="1" height="1" fill="#a0a0a0"/><rect x="9" y="232" width="1" height="1" fill="#a0a0a0"/><rect x="9" y="234" width="1" height="1" fill="#a0a0a0"/><rect x="9" y="236" width="1" height="1" fill="#a0a0a0"/><rect x="9" y="238" width="1" height="1" fill="#a0a0a0"/><rect x="9" y="240" width="1" height="1" fill="#a0a0a0"/><rect x="9" y="242" width="1" height="1" fill="#a0a0a0"/><rect x="9" y="244" width="1" height="1" fill="#a0a0a0"/><rect x="9" y="246" width="1" height="1" fill="#a0a0a0"/><rect x="9" y="248" width="1" height="1" fill="#a0a0a0"/><rect x="9" y="250" width="1" height="1" fill="#a0a0a0"/><rect x="9" y="252" width="1" height="1" fill="#a0a0a0"/><rect x="9" y="254" width="1" height="1" fill="#a0a0a0"/><rect x="9" y="256" width="1" height="1" fill="#a0a0a0"/><rect x="9" y="258" width="1" height="1" fill="#a0a0a0"/><rect x="9" y="260" width="1" height="1" fill="#a0a0a0"/><rect x="9" y="262" width="1" height="1" fill="#a0a0a0"/><rect x="9" y="264" width="1" height="1" fill="#a0a0a0"/><rect x="9" y="266" width="1" height="1" fill="#a0a0a0"/><rect x="9" y="268" width="1" height="1" fill="#a0a0a0"/><rect x="9" y="270" width="1" height="1" fill="#a0a0a0"/><rect x="9" y="272" width="1" height="1" fill="#a0a0a0"/><rect x="9" y="274" width="1" height="1" fill="#a0a0a0"/><rect x="9" y="276" width="1" height="1" fill="#a0a0a0"/><rect x="9" y="278" width="1" height="1" fill="#a0a0a0"/><rect x="9" y="280" width="1" height="1" fill="#a0a0a0"/><rect x="9" y="282" width="1" height="1" fill="#a0a0a0"/><rect x="9" y="284" width="1" height="1" fill="#a0a0a0"/><rect x="9" y="286" width="1" height="1" fill="#a0a0a0"/><rect x="9" y="288" width="1" height="1" fill="#a0a0a0"/><rect x="9" y="290" width="1" height="1" fill="#a0a0a0"/><rect x="9" y="292" width="1" height="1" fill="#a0a0a0"/><rect x="9" y="294" width="1" height="1" fill="#a0a0a0"/><rect x="9" y="296" width="1" height="1" fill="#a0a0a0"/><rect x="9" y="298" width="1" height="1" fill="#a0a0a0"/><rect x="9" y="300" width="1" height="1" fill="#a0a0a0"/><rect x="9" y="302" width="1" height="1" fill="#a0a0a0"/><rect x="9" y="304" width="1" height="1" fill="#a0a0a0"/><rect x="9" y="306" width="1" height="1" fill="#a0a0a0"/><rect x="9" y="308" width="1" height="1" fill="#a0a0a0"/><rect x="9" y="310" width="1" height="1" fill="#a0a0a0"/><rect x="27" y="19" width="1" height="1" fill="#a0a0a0"/><rect x="27" y="21" width="1" height="1" fill="#a0a0a0"/><rect x="27" y="23" width="1" height="1" fill="#a0a0a0"/><rect x="27" y="25" width="1" height="1" fill="#a0a0a0"/><rect x="27" y="27" width="1" height="1" fill="#a0a0a0"/><rect x="27" y="29" width="1" height="1" fill="#a0a0a0"/><rect x="27" y="31" width="1" height="1" fill="#a0a0a0"/><rect x="27" y="33" width="1" height="1" fill="#a0a0a0"/><rect x="27" y="35" width="1" height="1" fill="#a0a0a0"/><rect x="27" y="37" width="1" height="1" fill="#a0a0a0"/><rect x="27" y="39" width="1" height="1" fill="#a0a0a0"/><rect x="27" y="41" width="1" height="1" fill="#a0a0a0"/><rect x="27" y="43" width="1" height="1" fill="#a0a0a0"/><rect x="27" y="45" width="1" height="1" fill="#a0a0a0"/><rect x="27" y="47" width="1" height="1" fill="#a0a0a0"/><rect x="27" y="49" width="1" height="1" fill="#a0a0a0"/><rect x="27" y="51" width="1" height="1" fill="#a0a0a0"/><rect x="27" y="53" width="1" height="1" fill="#a0a0a0"/><rect x="27" y="55" width="1" height="1" fill="#a0a0a0"/><rect x="27" y="57" width="1" height="1" fill="#a0a0a0"/><rect x="27" y="59" width="1" height="1" fill="#a0a0a0"/><rect x="27" y="61" width="1" height="1" fill="#a0a0a0"/><rect x="27" y="63" width="1" height="1" fill="#a0a0a0"/><rect x="27" y="65" width="1" height="1" fill="#a0a0a0"/><rect x="27" y="67" width="1" height="1" fill="#a0a0a0"/><rect x="27" y="69" width="1" height="1" fill="#a0a0a0"/><rect x="27" y="71" width="1" height="1" fill="#a0a0a0"/><rect x="27" y="73" width="1" height="1" fill="#a0a0a0"/><rect x="27" y="75" width="1" height="1" fill="#a0a0a0"/><rect x="27" y="77" width="1" height="1" fill="#a0a0a0"/><rect x="27" y="79" width="1" height="1" fill="#a0a0a0"/><rect x="27" y="81" width="1" height="1" fill="#a0a0a0"/><rect x="27" y="83" width="1" height="1" fill="#a0a0a0"/><rect x="27" y="85" width="1" height="1" fill="#a0a0a0"/><rect x="27" y="87" width="1" height="1" fill="#a0a0a0"/><rect x="27" y="89" width="1" height="1" fill="#a0a0a0"/><rect x="27" y="91" width="1" height="1" fill="#a0a0a0"/><rect x="27" y="93" width="1" height="1" fill="#a0a0a0"/><rect x="27" y="95" width="1" height="1" fill="#a0a0a0"/><rect x="27" y="97" width="1" height="1" fill="#a0a0a0"/><rect x="27" y="99" width="1" height="1" fill="#a0a0a0"/><rect x="27" y="101" width="1" height="1" fill="#a0a0a0"/><rect x="27" y="103" width="1" height="1" fill="#a0a0a0"/><rect x="27" y="105" width="1" height="1" fill="#a0a0a0"/><rect x="27" y="107" width="1" height="1" fill="#a0a0a0"/><rect x="27" y="109" width="1" height="1" fill="#a0a0a0"/><rect x="27" y="111" width="1" height="1" fill="#a0a0a0"/><rect x="27" y="113" width="1" height="1" fill="#a0a0a0"/><rect x="27" y="115" width="1" height="1" fill="#a0a0a0"/><rect x="27" y="117" width="1" height="1" fill="#a0a0a0"/><rect x="27" y="119" width="1" height="1" fill="#a0a0a0"/><rect x="27" y="121" width="1" height="1" fill="#a0a0a0"/><rect x="27" y="123" width="1" height="1" fill="#a0a0a0"/><rect x="27" y="125" width="1" height="1" fill="#a0a0a0"/><rect x="27" y="127" width="1" height="1" fill="#a0a0a0"/><rect x="27" y="129" width="1" height="1" fill="#a0a0a0"/><rect x="27" y="131" width="1" height="1" fill="#a0a0a0"/><rect x="27" y="133" width="1" height="1" fill="#a0a0a0"/><rect x="27" y="135" width="1" height="1" fill="#a0a0a0"/><rect x="27" y="137" width="1" height="1" fill="#a0a0a0"/><rect x="27" y="139" width="1" height="1" fill="#a0a0a0"/><rect x="27" y="141" width="1" height="1" fill="#a0a0a0"/><rect x="27" y="143" width="1" height="1" fill="#a0a0a0"/><rect x="27" y="145" width="1" height="1" fill="#a0a0a0"/><rect x="27" y="147" width="1" height="1" fill="#a0a0a0"/><rect x="27" y="149" width="1" height="1" fill="#a0a0a0"/><rect x="27" y="151" width="1" height="1" fill="#a0a0a0"/><rect x="27" y="153" width="1" height="1" fill="#a0a0a0"/><rect x="27" y="155" width="1" height="1" fill="#a0a0a0"/><rect x="27" y="157" width="1" height="1" fill="#a0a0a0"/><rect x="27" y="159" width="1" height="1" fill="#a0a0a0"/><rect x="27" y="161" width="1" height="1" fill="#a0a0a0"/><rect x="27" y="163" width="1" height="1" fill="#a0a0a0"/><rect x="27" y="165" width="1" height="1" fill="#a0a0a0"/><rect x="27" y="167" width="1" height="1" fill="#a0a0a0"/><rect x="27" y="169" width="1" height="1" fill="#a0a0a0"/><rect x="27" y="171" width="1" height="1" fill="#a0a0a0"/><rect x="27" y="173" width="1" height="1" fill="#a0a0a0"/><rect x="27" y="175" width="1" height="1" fill="#a0a0a0"/><rect x="27" y="177" width="1" height="1" fill="#a0a0a0"/><rect x="27" y="179" width="1" height="1" fill="#a0a0a0"/><rect x="27" y="181" width="1" height="1" fill="#a0a0a0"/><rect x="27" y="183" width="1" height="1" fill="#a0a0a0"/><rect x="27" y="185" width="1" height="1" fill="#a0a0a0"/><rect x="27" y="187" width="1" height="1" fill="#a0a0a0"/><rect x="27" y="189" width="1" height="1" fill="#a0a0a0"/><rect x="27" y="191" width="1" height="1" fill="#a0a0a0"/><rect x="27" y="193" width="1" height="1" fill="#a0a0a0"/><rect x="27" y="195" width="1" height="1" fill="#a0a0a0"/><rect x="27" y="197" width="1" height="1" fill="#a0a0a0"/><rect x="27" y="199" width="1" height="1" fill="#a0a0a0"/><rect x="27" y="201" width="1" height="1" fill="#a0a0a0"/><rect x="27" y="203" width="1" height="1" fill="#a0a0a0"/><rect x="27" y="205" width="1" height="1" fill="#a0a0a0"/><rect x="27" y="207" width="1" height="1" fill="#a0a0a0"/><rect x="27" y="209" width="1" height="1" fill="#a0a0a0"/><rect x="27" y="211" width="1" height="1" fill="#a0a0a0"/><rect x="27" y="213" width="1" height="1" fill="#a0a0a0"/><rect x="27" y="215" width="1" height="1" fill="#a0a0a0"/><rect x="27" y="217" width="1" height="1" fill="#a0a0a0"/><rect x="27" y="219" width="1" height="1" fill="#a0a0a0"/><rect x="27" y="221" width="1" height="1" fill="#a0a0a0"/><rect x="27" y="223" width="1" height="1" fill="#a0a0a0"/><rect x="27" y="225" width="1" height="1" fill="#a0a0a0"/><rect x="27" y="227" width="1" height="1" fill="#a0a0a0"/><rect x="27" y="229" width="1" height="1" fill="#a0a0a0"/><rect x="27" y="231" width="1" height="1" fill="#a0a0a0"/><rect x="27" y="233" width="1" height="1" fill="#a0a0a0"/><rect x="27" y="235" width="1" height="1" fill="#a0a0a0"/><rect x="27" y="237" width="1" height="1" fill="#a0a0a0"/><rect x="27" y="239" width="1" height="1" fill="#a0a0a0"/><rect x="27" y="241" width="1" height="1" fill="#a0a0a0"/><rect x="27" y="243" width="1" height="1" fill="#a0a0a0"/><rect x="27" y="245" width="1" height="1" fill="#a0a0a0"/><rect x="27" y="247" width="1" height="1" fill="#a0a0a0"/><rect x="27" y="249" width="1" height="1" fill="#a0a0a0"/><rect x="27" y="251" width="1" height="1" fill="#a0a0a0"/><rect x="27" y="253" width="1" height="1" fill="#a0a0a0"/><rect x="27" y="255" width="1" height="1" fill="#a0a0a0"/><rect x="27" y="257" width="1" height="1" fill="#a0a0a0"/><rect x="27" y="259" width="1" height="1" fill="#a0a0a0"/><rect x="27" y="261" width="1" height="1" fill="#a0a0a0"/><rect x="27" y="263" width="1" height="1" fill="#a0a0a0"/><rect x="27" y="265" width="1" height="1" fill="#a0a0a0"/><rect x="27" y="267" width="1" height="1" fill="#a0a0a0"/><rect x="27" y="269" width="1" height="1" fill="#a0a0a0"/><rect x="27" y="271" width="1" height="1" fill="#a0a0a0"/><rect x="27" y="273" width="1" height="1" fill="#a0a0a0"/><rect x="27" y="275" width="1" height="1" fill="#a0a0a0"/><rect x="27" y="277" width="1" height="1" fill="#a0a0a0"/><rect x="27" y="279" width="1" height="1" fill="#a0a0a0"/><rect x="27" y="281" width="1" height="1" fill="#a0a0a0"/><rect x="27" y="283" width="1" height="1" fill="#a0a0a0"/><rect x="27" y="285" width="1" height="1" fill="#a0a0a0"/><rect x="27" y="287" width="1" height="1" fill="#a0a0a0"/><rect x="27" y="289" width="1" height="1" fill="#a0a0a0"/><rect x="27" y="291" width="1" height="1" fill="#a0a0a0"/><rect x="27" y="293" width="1" height="1" fill="#a0a0a0"/><rect x="27" y="295" width="1" height="1" fill="#a0a0a0"/><rect x="27" y="297" width="1" height="1" fill="#a0a0a0"/><rect x="27" y="299" width="1" height="1" fill="#a0a0a0"/><rect x="27" y="301" width="1" height="1" fill="#a0a0a0"/><rect x="27" y="303" width="1" height="1" fill="#a0a0a0"/><rect x="27" y="305" width="1" height="1" fill="#a0a0a0"/><rect x="27" y="307" width="1" height="1" fill="#a0a0a0"/><rect x="27" y="309" width="1" height="1" fill="#a0a0a0"/><rect x="27" y="311" width="1" height="1" fill="#a0a0a0"/><rect x="14" y="9" width="1" height="1" fill="#a0a0a0"/><rect x="16" y="9" width="1" height="1" fill="#a0a0a0"/><rect x="18" y="9" width="1" height="1" fill="#a0a0a0"/><rect x="29" y="27" width="1" height="1" fill="#a0a0a0"/><rect x="31" y="27" width="1" height="1" fill="#a0a0a0"/><rect x="33" y="27" width="1" height="1" fill="#a0a0a0"/><rect x="35" y="27" width="1" height="1" fill="#a0a0a0"/><rect x="29" y="45" width="1" height="1" fill="#a0a0a0"/><rect x="31" y="45" width="1" height="1" fill="#a0a0a0"/><rect x="33" y="45" width="1" height="1" fill="#a0a0a0"/><rect x="35" y="45" width="1" height="1" fill="#a0a0a0"/><rect x="29" y="63" width="1" height="1" fill="#a0a0a0"/><rect x="31" y="63" width="1" height="1" fill="#a0a0a0"/><rect x="33" y="63" width="1" height="1" fill="#a0a0a0"/><rect x="35" y="63" width="1" height="1" fill="#a0a0a0"/><rect x="29" y="81" width="1" height="1" fill="#a0a0a0"/><rect x="31" y="81" width="1" height="1" fill="#a0a0a0"/><rect x="33" y="81" width="1" height="1" fill="#a0a0a0"/><rect x="35" y="81" width="1" height="1" fill="#a0a0a0"/><rect x="29" y="99" width="1" height="1" fill="#a0a0a0"/><rect x="31" y="99" width="1" height="1" fill="#a0a0a0"/><rect x="33" y="99" width="1" height="1" fill="#a0a0a0"/><rect x="35" y="99" width="1" height="1" fill="#a0a0a0"/><rect x="29" y="117" width="1" height="1" fill="#a0a0a0"/><rect x="31" y="117" width="1" height="1" fill="#a0a0a0"/><rect x="33" y="117" width="1" height="1" fill="#a0a0a0"/><rect x="35" y="117" width="1" height="1" fill="#a0a0a0"/><rect x="29" y="135" width="1" height="1" fill="#a0a0a0"/><rect x="31" y="135" width="1" height="1" fill="#a0a0a0"/><rect x="33" y="135" width="1" height="1" fill="#a0a0a0"/><rect x="35" y="135" width="1" height="1" fill="#a0a0a0"/><rect x="29" y="153" width="1" height="1" fill="#a0a0a0"/><rect x="31" y="153" width="1" height="1" fill="#a0a0a0"/><rect x="33" y="153" width="1" height="1" fill="#a0a0a0"/><rect x="35" y="153" width="1" height="1" fill="#a0a0a0"/><rect x="29" y="171" width="1" height="1" fill="#a0a0a0"/><rect x="31" y="171" width="1" height="1" fill="#a0a0a0"/><rect x="33" y="171" width="1" height="1" fill="#a0a0a0"/><rect x="35" y="171" width="1" height="1" fill="#a0a0a0"/><rect x="29" y="189" width="1" height="1" fill="#a0a0a0"/><rect x="31" y="189" width="1" height="1" fill="#a0a0a0"/><rect x="33" y="189" width="1" height="1" fill="#a0a0a0"/><rect x="35" y="189" width="1" height="1" fill="#a0a0a0"/><rect x="29" y="207" width="1" height="1" fill="#a0a0a0"/><rect x="31" y="207" width="1" height="1" fill="#a0a0a0"/><rect x="33" y="207" width="1" height="1" fill="#a0a0a0"/><rect x="35" y="207" width="1" height="1" fill="#a0a0a0"/><rect x="29" y="225" width="1" height="1" fill="#a0a0a0"/><rect x="31" y="225" width="1" height="1" fill="#a0a0a0"/><rect x="33" y="225" width="1" height="1" fill="#a0a0a0"/><rect x="35" y="225" width="1" height="1" fill="#a0a0a0"/><rect x="29" y="243" width="1" height="1" fill="#a0a0a0"/><rect x="31" y="243" width="1" height="1" fill="#a0a0a0"/><rect x="33" y="243" width="1" height="1" fill="#a0a0a0"/><rect x="35" y="243" width="1" height="1" fill="#a0a0a0"/><rect x="29" y="261" width="1" height="1" fill="#a0a0a0"/><rect x="31" y="261" width="1" height="1" fill="#a0a0a0"/><rect x="33" y="261" width="1" height="1" fill="#a0a0a0"/><rect x="35" y="261" width="1" height="1" fill="#a0a0a0"/><rect x="29" y="279" width="1" height="1" fill="#a0a0a0"/><rect x="31" y="279" width="1" height="1" fill="#a0a0a0"/><rect x="33" y="279" width="1" height="1" fill="#a0a0a0"/><rect x="35" y="279" width="1" height="1" fill="#a0a0a0"/><rect x="29" y="297" width="1" height="1" fill="#a0a0a0"/><rect x="31" y="297" width="1" height="1" fill="#a0a0a0"/><rect x="33" y="297" width="1" height="1" fill="#a0a0a0"/><rect x="35" y="297" width="1" height="1" fill="#a0a0a0"/><rect x="29" y="315" width="1" height="1" fill="#a0a0a0"/><rect x="31" y="315" width="1" height="1" fill="#a0a0a0"/><rect x="33" y="315" width="1" height="1" fill="#a0a0a0"/><rect x="35" y="315" width="1" height="1" fill="#a0a0a0"/><rect x="4.5" y="5.5" width="8" height="8" fill="#fff" stroke="#8c8c8c" stroke-width="1" shape-rendering="auto"/><rect x="6" y="9" width="5" height="1" fill="#000"/></svg></div>
<div class="t " style="left:235.2px;top:119.32px;font-size:12.05px;line-height:15px;color:#000;">Sterling/Verified Volunteers</div>
<div style="position:absolute;left:209px;top:117px;width:220px;height:312px;overflow:hidden"><div class="t " style="left:43.80000000000001px;top:20.32px;font-size:12.05px;line-height:15px;color:#000;letter-spacing:0.23px">Date created</div></div>
<div style="position:absolute;left:209px;top:117px;width:220px;height:312px;overflow:hidden"><div class="t " style="left:43.80000000000001px;top:38.32px;font-size:12.05px;line-height:15px;color:#000;letter-spacing:0.31px">Date entered</div></div>
<div style="position:absolute;left:209px;top:117px;width:220px;height:312px;overflow:hidden"><div class="t " style="left:43.80000000000001px;top:56.32px;font-size:12.05px;line-height:15px;color:#000;letter-spacing:0.15px">Date retrieved</div></div>
<div style="position:absolute;left:209px;top:117px;width:220px;height:312px;overflow:hidden"><div class="t " style="left:43.80000000000001px;top:74.32px;font-size:12.05px;line-height:15px;color:#000;letter-spacing:0.3px">E-mail status</div></div>
<div style="position:absolute;left:209px;top:117px;width:220px;height:312px;overflow:hidden"><div class="t " style="left:43.80000000000001px;top:92.32px;font-size:12.05px;line-height:15px;color:#000;letter-spacing:0.29px">Followup URL</div></div>
<div style="position:absolute;left:209px;top:117px;width:220px;height:312px;overflow:hidden"><div class="t " style="left:43.80000000000001px;top:110.32px;font-size:12.05px;line-height:15px;color:#000;letter-spacing:0.34px">Has 'Clear'</div></div>
<div style="position:absolute;left:209px;top:117px;width:220px;height:312px;overflow:hidden"><div class="t " style="left:43.80000000000001px;top:128.32px;font-size:12.05px;line-height:15px;color:#000;letter-spacing:0.45px">Has 'Consider'</div></div>
<div style="position:absolute;left:209px;top:117px;width:220px;height:312px;overflow:hidden"><div class="t " style="left:43.80000000000001px;top:146.32px;font-size:12.05px;line-height:15px;color:#000;letter-spacing:0.33px">Has 'Unperformable'</div></div>
<div style="position:absolute;left:249px;top:279px;width:56px;height:18px;background:#0078d7;box-sizing:border-box;border:1px dotted #e08020"></div>
<div class="t " style="left:252.8px;top:281.32px;font-size:12.05px;line-height:15px;color:#fff;letter-spacing:0.25px"><u>Package</u></div>
<div style="position:absolute;left:209px;top:117px;width:220px;height:312px;overflow:hidden"><div class="t " style="left:43.80000000000001px;top:182.32px;font-size:12.05px;line-height:15px;color:#000;letter-spacing:0.45px">Processing issues</div></div>
<div style="position:absolute;left:209px;top:117px;width:220px;height:312px;overflow:hidden"><div class="t " style="left:43.80000000000001px;top:200.32px;font-size:12.05px;line-height:15px;color:#000;letter-spacing:0.22px">Report URL</div></div>
<div style="position:absolute;left:209px;top:117px;width:220px;height:312px;overflow:hidden"><div class="t " style="left:43.80000000000001px;top:218.32px;font-size:12.05px;line-height:15px;color:#000;letter-spacing:0.2px">Send/receive log</div></div>
<div style="position:absolute;left:209px;top:117px;width:220px;height:312px;overflow:hidden"><div class="t " style="left:43.80000000000001px;top:236.32px;font-size:12.05px;line-height:15px;color:#000;letter-spacing:0.28px">Status</div></div>
<div style="position:absolute;left:209px;top:117px;width:220px;height:312px;overflow:hidden"><div class="t " style="left:43.80000000000001px;top:254.32px;font-size:12.05px;line-height:15px;color:#000;letter-spacing:0.24px">Status URL</div></div>
<div style="position:absolute;left:209px;top:117px;width:220px;height:312px;overflow:hidden"><div class="t " style="left:43.80000000000001px;top:272.32px;font-size:12.05px;line-height:15px;color:#000;letter-spacing:0.21px">Vendor processing status</div></div>
<div style="position:absolute;left:209px;top:117px;width:220px;height:312px;overflow:hidden"><div class="t " style="left:43.80000000000001px;top:290.32px;font-size:12.05px;line-height:15px;color:#000;letter-spacing:0.12px">Vendor reference</div></div>
<div style="position:absolute;left:209px;top:117px;width:220px;height:312px;overflow:hidden"><div class="t " style="left:43.80000000000001px;top:308.32px;font-size:12.05px;line-height:15px;color:#000;letter-spacing:0.25px">Vendor email</div></div>
</body></html>
